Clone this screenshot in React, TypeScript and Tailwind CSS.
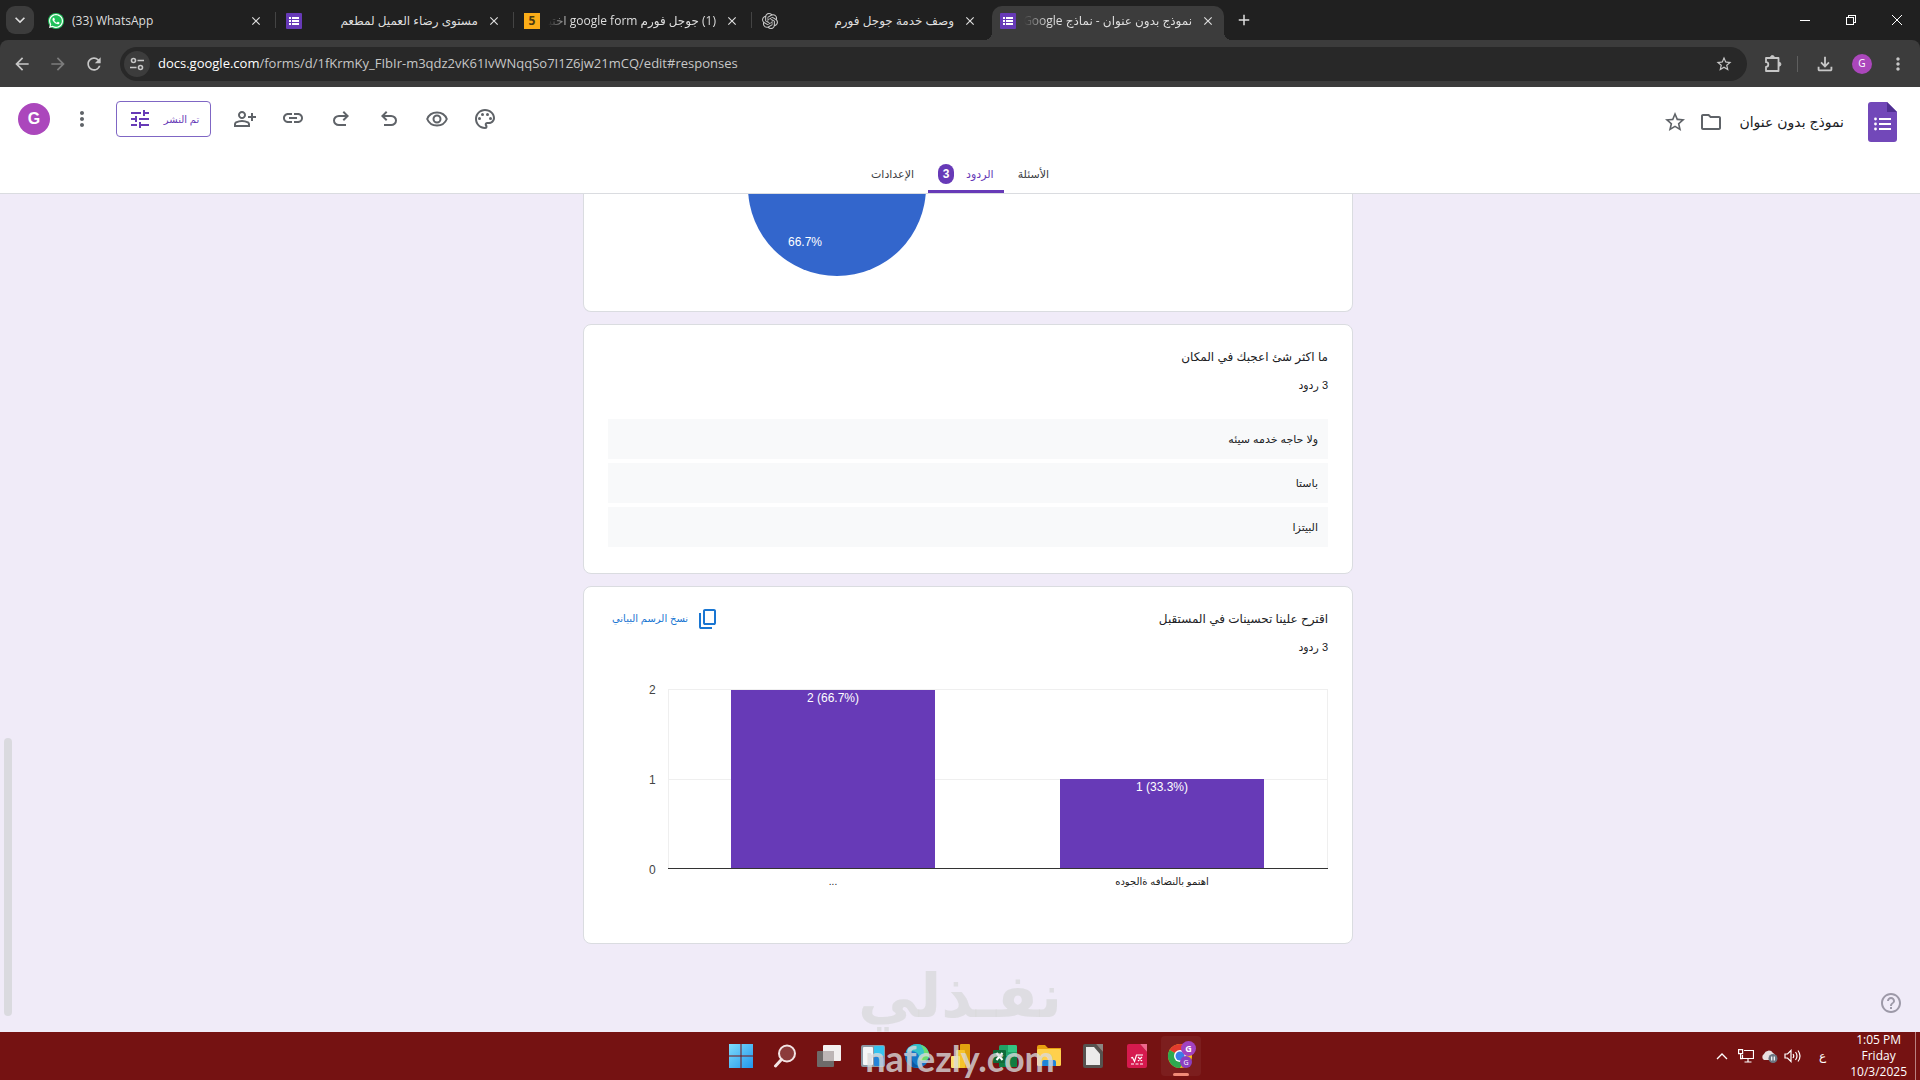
import React from 'react';
import {
  MdArrowBack,
  MdArrowForward,
  MdRefresh,
  MdStarBorder,
  MdMoreVert,
  MdTune,
  MdLink,
  MdOutlinePalette,
  MdOutlineFolder,
  MdHelpOutline,
  MdOutlineFileDownload,
  MdClose,
  MdAdd,
  MdKeyboardArrowDown,
} from 'react-icons/md';
import { FaWhatsapp } from 'react-icons/fa';
import { SiOpenai } from 'react-icons/si';

type IconProps = { className?: string };

// Material Symbols share the "0 -960 960 960" view box
const Symbol = ({ d, className }: { d: string; className?: string }) => (
  <svg viewBox="0 -960 960 960" fill="currentColor" className={className}>
    <path d={d} />
  </svg>
);

const PERSON_ADD =
  'M720-400v-120H600v-80h120v-120h80v120h120v80H800v120h-80Zm-360-80q-66 0-113-47t-47-113q0-66 47-113t113-47q66 0 113 47t47 113q0 66-47 113t-113 47ZM40-160v-112q0-34 17.500-62.500T104-378q62-31 126-46.500T360-440q66 0 130 15.500T616-378q29 15 46.500 43.500T680-272v112H40Zm80-80h480v-32q0-11-5.500-20T580-306q-54-27-109-40.500T360-360q-56 0-111 13.500T140-306q-9 5-14.500 14t-5.500 20v32Zm240-320q33 0 56.500-23.500T440-640q0-33-23.500-56.500T360-720q-33 0-56.500 23.500T280-640q0 33 23.500 56.500T360-560Z';
const REDO =
  'M396-200q-97 0-166.500-63T160-420q0-94 69.500-157T396-640h252L544-744l56-56 200 200-200 200-56-56 104-104H396q-63 0-109.500 40T240-420q0 60 46.500 100T396-280h284v80H396Z';
const UNDO =
  'M280-200v-80h284q63 0 109.500-40T720-420q0-60-46.500-100T564-560H312l104 104-56 56-200-200 200-200 56 56-104 104h252q97 0 166.500 63T800-420q0 94-69.500 157T564-200H280Z';
const COPY =
  'M360-240q-33 0-56.500-23.500T280-320v-480q0-33 23.500-56.500T360-880h360q33 0 56.500 23.500T800-800v480q0 33-23.500 56.500T720-240H360Zm0-80h360v-480H360v480ZM200-80q-33 0-56.500-23.500T120-160v-560h80v560h440v80H200Z';

const EyeIcon = ({ className }: IconProps) => (
  <svg viewBox="0 0 24 24" fill="none" stroke="currentColor" strokeWidth="2" className={className}>
    <path d="M2.200 12C3.800 8 7.600 5.500 12 5.500S20.200 8 21.800 12c-1.600 4-5.400 6.500-9.800 6.500S3.800 16 2.200 12Z" />
    <circle cx="12" cy="12" r="3.500" />
  </svg>
);

const ExtensionIcon = ({ className }: IconProps) => (
  <svg viewBox="0 0 20 20" fill="none" stroke="currentColor" strokeWidth="1.800" strokeLinejoin="round" className={className}>
    <path d="M3 4h12.500v13H3v-4.200a2.300 2.300 0 0 0 0-4.600z" />
    <path d="M7.500 3.500a1.900 1.900 0 0 1 3.800 0zM16 8.300a1.900 1.900 0 0 1 0 3.800z" fill="currentColor" strokeWidth="1" />
  </svg>
);

const FormsFavicon = () => (
  <svg viewBox="0 0 16 16" className="size-4 shrink-0">
    <rect width="16" height="16" rx="1" fill="#673ab7" />
    <path d="M3 4h2v2H3zM3 7h2v2H3zM3 10h2v2H3zM6 4h7v2H6zM6 7h7v2H6zM6 10h7v2H6z" fill="#fff" />
  </svg>
);

const WhatsAppFavicon = () => (
  <span className="flex size-4 shrink-0 items-center justify-center rounded-full bg-[#1fc15a] text-white">
    <FaWhatsapp className="size-4" />
  </span>
);

const MostaqlFavicon = () => (
  <span className="flex size-4 shrink-0 items-center justify-center bg-[#fbad18] text-xs font-bold text-[#4a3a10]">5</span>
);

const FormsLogo = () => (
  <svg viewBox="0 0 29 40" className="h-10 w-[29px]">
    <path d="M3 0h16l10 10v27a3 3 0 0 1-3 3H3a3 3 0 0 1-3-3V3a3 3 0 0 1 3-3Z" fill="#7248b9" />
    <path d="M19 0l10 10H19Z" fill="#4f2f91" />
    <g fill="#fff">
      <circle cx="7.500" cy="17" r="1.400" />
      <circle cx="7.500" cy="22" r="1.400" />
      <circle cx="7.500" cy="27" r="1.400" />
      <path d="M11 16h12v2H11zM11 21h12v2H11zM11 26h12v2H11z" />
    </g>
  </svg>
);

const tabs = [
  { title: '(33) WhatsApp', icon: <WhatsAppFavicon />, rtl: false },
  { title: 'مستوى رضاء العميل لمطعم', icon: <FormsFavicon />, rtl: true },
  { title: '(1) جوجل فورم google form اختبا', icon: <MostaqlFavicon />, rtl: true, fade: true },
  { title: 'وصف خدمة جوجل فورم', icon: <SiOpenai className="size-4 shrink-0 text-[#c8c8c8]" />, rtl: true },
  { title: 'نموذج بدون عنوان - نماذج Google', icon: <FormsFavicon />, rtl: true, fade: true, active: true },
];

const TabStrip = () => (
  <div className="flex h-10 bg-[#202020] text-[#dedede]">
    <button aria-label="Search tabs" className="mt-1.5 ml-1.5 flex size-7 shrink-0 items-center justify-center rounded-[9px] bg-[#3c3c3c]">
      <MdKeyboardArrowDown className="size-5" />
    </button>
    <div className="ml-1.5 flex min-w-0 gap-1.5">
      {tabs.map((tab, i) => (
        <div
          key={tab.title}
          className={`relative mt-1.5 flex w-[232px] min-w-0 items-center gap-2 px-2 pb-1 ${tab.active ? 'rounded-t-[10px] bg-[#3c3c3c]' : ''}`}
        >
          {tab.icon}
          <span
            dir={tab.rtl ? 'rtl' : 'ltr'}
            className={`min-w-0 flex-1 overflow-hidden text-xs leading-5 whitespace-nowrap ${
              tab.fade ? '[mask-image:linear-gradient(to_right,transparent,#000_24px)]' : ''
            }`}
          >
            {tab.title}
          </span>
          <button aria-label="Close tab" className="flex size-4 shrink-0 items-center justify-center">
            <MdClose className="size-3.5" />
          </button>
          {i < 3 && <span className="absolute top-1.5 -right-1 h-4 w-px bg-[#444]" />}
          {tab.active && (
            <>
              <span className="absolute bottom-0 -left-2 size-2 bg-[radial-gradient(circle_at_0_0,transparent_8px,#3c3c3c_8px)]" />
              <span className="absolute -right-2 bottom-0 size-2 bg-[radial-gradient(circle_at_100%_0,transparent_8px,#3c3c3c_8px)]" />
            </>
          )}
        </div>
      ))}
    </div>
    <button aria-label="New tab" className="ml-2.5 flex w-5 items-center justify-center">
      <MdAdd className="size-[18px]" />
    </button>
    <div className="ml-auto flex text-white">
      <button aria-label="Minimize" className="flex w-[46px] items-center justify-center">
        <span className="h-px w-2.5 bg-white" />
      </button>
      <button aria-label="Restore" className="flex w-[46px] items-center justify-center">
        <svg viewBox="0 0 10 10" className="size-2.5" fill="none" stroke="currentColor" shapeRendering="crispEdges">
          <path d="M.5 2.500h7v7h-7zM2.500 2.500v-2h7v7h-2" />
        </svg>
      </button>
      <button aria-label="Close" className="flex w-[46px] items-center justify-center">
        <svg viewBox="0 0 10 10" className="size-2.5" fill="none" stroke="currentColor">
          <path d="M0 0l10 10M10 0L0 10" />
        </svg>
      </button>
    </div>
  </div>
);

const AddressBar = () => (
  <div className="bg-[#202020]">
    <div className="flex h-[47px] items-center rounded-t-lg bg-[#3c3c3c] px-3 text-[#c7c7c7]">
      <div className="flex gap-4 pr-4">
        <button aria-label="Back"><MdArrowBack className="size-5" /></button>
        <button aria-label="Forward" className="text-[#7c7c7c]"><MdArrowForward className="size-5" /></button>
        <button aria-label="Reload"><MdRefresh className="size-5" /></button>
      </div>
      <div className="flex h-[34px] flex-1 items-center rounded-full bg-[#282828] pr-3.5 pl-1">
        <button aria-label="Site information" className="flex size-[26px] items-center justify-center rounded-full bg-[#3c3c3c]">
          <svg viewBox="0 0 16 16" className="size-4" fill="none" stroke="currentColor" strokeWidth="1.600">
            <circle cx="4.500" cy="4.500" r="2" />
            <path d="M8.500 4.500H15M1 11.500h6.500" />
            <circle cx="11.500" cy="11.500" r="2" />
          </svg>
        </button>
        <div className="flex-1 pl-2 text-[13px] text-[#c7c7c7]">
          <span className="text-white">docs.google.com</span>/forms/d/1fKrmKy_FIbIr-m3qdz2vK61IvWNqqSo7I1Z6jw21mCQ/edit#responses
        </div>
        <button aria-label="Bookmark"><MdStarBorder className="size-[18px]" /></button>
      </div>
      <div className="flex items-center pl-4">
        <button aria-label="Extensions"><ExtensionIcon className="size-5" /></button>
        <span className="mr-4 ml-3.5 h-4 w-px bg-[#5f5f5f]" />
        <button aria-label="Downloads"><MdOutlineFileDownload className="size-[22px]" /></button>
        <button aria-label="Profile" className="ml-4 size-5 rounded-full bg-[#ab47bc] text-[10px] text-white">G</button>
        <button aria-label="Menu" className="ml-4"><MdMoreVert className="size-5" /></button>
      </div>
    </div>
  </div>
);

const FormHeader = () => (
  <header className="flex h-[107px] flex-col border-b border-[#dadce0] bg-white font-['Liberation_Sans','DejaVu_Sans',sans-serif]">
    <div className="flex h-16 items-center pr-[23px] pl-[18px] text-[#5f6368]">
      <button aria-label="Account" className="size-8 rounded-full bg-[#ab47bc] text-base font-bold text-white">G</button>
      <button aria-label="More" className="ml-5"><MdMoreVert className="size-6" /></button>
      <button dir="rtl" className="ml-[22px] flex h-9 w-[95px] items-center justify-center gap-3 rounded border border-[#7f66c4] text-[10px] text-[#673ab7]">
        تم النشر
        <MdTune className="size-6" />
      </button>
      <div className="ml-[22px] flex gap-6">
        <button aria-label="Share"><Symbol d={PERSON_ADD} className="size-6" /></button>
        <button aria-label="Link" className="pb-0.5"><MdLink className="size-6" /></button>
        <button aria-label="Redo"><Symbol d={REDO} className="size-6" /></button>
        <button aria-label="Undo"><Symbol d={UNDO} className="size-6" /></button>
        <button aria-label="Preview"><EyeIcon className="size-6" /></button>
        <button aria-label="Theme"><MdOutlinePalette className="size-6" /></button>
      </div>
      <div className="ml-auto flex items-center pt-1.5">
        <button aria-label="Star"><MdStarBorder className="size-6" /></button>
        <button aria-label="Move" className="ml-3"><MdOutlineFolder className="size-6" /></button>
        <h1 dir="rtl" className="ml-4 text-sm text-[#202124]">نموذج بدون عنوان</h1>
        <span className="ml-6"><FormsLogo /></span>
      </div>
    </div>
    <nav dir="rtl" className="mt-1 flex flex-1 justify-center text-[11px] text-[#3c4043]">
      <a href="#questions" className="flex items-center px-3.5">الأسئلة</a>
      <a href="#responses" className="flex items-center gap-3 border-b-[3px] border-[#673ab7] px-2.5 pt-[3px] text-[#673ab7]">
        الردود
        <span className="flex h-5 w-4 items-center justify-center rounded-full bg-[#673ab7] text-xs font-bold text-white">3</span>
      </a>
      <a href="#settings" className="flex items-center px-3.5">الإعدادات</a>
    </nav>
  </header>
);

const PieCard = () => (
  <section className="h-[118px] rounded-b-lg border border-t-0 border-[#dadce0] bg-white">
    <svg viewBox="0 0 768 90" className="w-full">
      <circle cx="253" cy="-7" r="89" fill="#3366cc" />
      <text x="204" y="52" fontSize="12" fill="#fff">66.7%</text>
    </svg>
  </section>
);

const answers = ['ولا حاجه خدمه سيئه', 'باستا', 'البيتزا'];

const AnswersCard = () => (
  <section dir="rtl" className="rounded-lg border border-[#dadce0] bg-white px-6 pt-5 pb-[26px]">
    <h2 className="text-xs leading-6 text-[#202124]">ما اكثر شئ اعجبك في المكان</h2>
    <p className="mt-1.5 text-[11px] leading-5 text-[#202124]">3 ردود</p>
    <ul className="mt-6 flex flex-col gap-1">
      {answers.map((answer) => (
        <li key={answer} className="flex h-10 items-center bg-[#f8f9fa] px-2.5 text-[11px] text-[#202124]">
          {answer}
        </li>
      ))}
    </ul>
  </section>
);

const bars = [
  { x: 123, value: 2, label: '2 (66.7%)', name: '...' },
  { x: 452, value: 1, label: '1 (33.3%)', name: 'اهتمو بالنضافه ةالجوده' },
];

const ChartCard = () => (
  <section className="rounded-lg border border-[#dadce0] bg-white px-6 pt-5 pb-[42px]">
    <div className="flex items-start justify-between">
      <button dir="rtl" className="flex items-center gap-2 px-1 text-[10px] leading-6 text-[#1976d2]">
        <Symbol d={COPY} className="size-6" />
        نسخ الرسم البياني
      </button>
      <div dir="rtl" className="text-[#202124]">
        <h2 className="text-xs leading-6">اقترح علينا تحسينات في المستقبل</h2>
        <p className="mt-1.5 text-[11px] leading-5">3 ردود</p>
      </div>
    </div>
    <svg viewBox="0 0 720 220" className="mt-6 w-full" fontSize="12">
      <path d="M60 8.500H720M60 98.500H720M60.500 9V188M719.500 9V188" stroke="#efefef" fill="none" />
      {[2, 1, 0].map((n, i) => (
        <text key={n} x="41" y={13 + i * 90} fill="#444">{n}</text>
      ))}
      {bars.map((bar) => (
        <g key={bar.name} textAnchor="middle">
          <rect x={bar.x} y={187 - bar.value * 89} width="204" height={bar.value * 89} fill="#673ab7" />
          <text x={bar.x + 102} y={199 - bar.value * 89} fill="#fff">{bar.label}</text>
          <text x={bar.x + 102} y="204" fontSize="10" fill="#222" direction={bar.value === 1 ? 'rtl' : 'ltr'}>{bar.name}</text>
        </g>
      ))}
      <path d="M60 187.500H720" stroke="#333" />
    </svg>
  </section>
);

const WindowsIcon = () => (
  <svg viewBox="0 0 24 24" className="size-6">
    <defs>
      <linearGradient id="win" x1="0" y1="0" x2="1" y2="1">
        <stop offset="0" stopColor="#7fdcfb" />
        <stop offset="1" stopColor="#2196ec" />
      </linearGradient>
    </defs>
    <path d="M0 0h11.500v11.500H0zM12.500 0H24v11.500H12.500zM0 12.500h11.500V24H0zM12.500 12.500H24V24H12.500z" fill="url(#win)" />
  </svg>
);

const SearchIcon = () => (
  <svg viewBox="0 0 24 24" className="size-6" fill="none" stroke="#f3e4e4" strokeWidth="2">
    <circle cx="14" cy="9.500" r="8" fill="#8b3a3a" />
    <path d="M8.500 15.500L2.500 22" strokeWidth="3" strokeLinecap="round" />
  </svg>
);

const TaskViewIcon = () => (
  <svg viewBox="0 0 24 24" className="size-6">
    <rect x="0" y="7" width="17" height="16" rx="1" fill="#6e6a69" />
    <rect x="6" y="1" width="18" height="16" rx="1" fill="#f2f0f0" />
    <path d="M6 7h11v10H6z" fill="#bdb6b6" />
  </svg>
);

const WidgetsIcon = () => (
  <svg viewBox="0 0 24 24" className="size-6">
    <rect y="1" width="24" height="22" rx="2" fill="#8c9aa6" />
    <rect x="2" y="3" width="10" height="18" rx="1" fill="#f4f6f8" />
    <rect x="13" y="2" width="10" height="10" rx="1" fill="#35c4f0" />
    <rect x="13" y="13" width="10" height="9" rx="1" fill="#2684d9" />
  </svg>
);

const EdgeIcon = () => (
  <svg viewBox="0 0 24 24" className="size-6">
    <circle cx="12" cy="12" r="12" fill="#1577c8" />
    <path d="M1 8C3 3 7 0 12 0c7 0 12 5 12 11 0 4-3 6-6 6-3 0-5-1-4-3 1-5-6-9-13-6Z" fill="#35c1c8" />
    <path d="M15 .5c5 1.500 9 5.500 9 10.500 0 4-3 6-6 6-2 0-4-.5-4-2 7-2 6-10 1-14.500Z" fill="#6bdc6f" />
    <path d="M8 10c-3 5 0 11 8 12.500C10 25 1 22 .5 12 1 9 6 7 8 10Z" fill="#0c59a4" />
  </svg>
);

const PowerBiIcon = () => (
  <svg viewBox="0 0 24 24" className="size-6">
    <rect x="11" y="0" width="10" height="24" rx="1" fill="#e2a10f" />
    <rect x="7" y="6" width="9" height="18" rx="1" fill="#f5c42c" />
    <rect x="2" y="12" width="9" height="12" rx="1" fill="#fbe06a" />
  </svg>
);

const ExcelIcon = () => (
  <svg viewBox="0 0 24 24" className="size-6">
    <rect x="6" y="1" width="18" height="22" rx="1.500" fill="#21a366" />
    <path d="M15 1h7.500A1.500 1.500 0 0 1 24 2.500V8h-9z" fill="#33c481" />
    <path d="M6 12h18v9.500a1.500 1.500 0 0 1-1.500 1.500h-15A1.500 1.500 0 0 1 6 21.500z" fill="#107c41" />
    <rect x="0" y="6" width="13" height="13" rx="1" fill="#0f6a38" />
    <path d="M3.500 9l6 7M9.500 9l-6 7" stroke="#fff" strokeWidth="2" />
  </svg>
);

const ExplorerIcon = () => (
  <svg viewBox="0 0 24 24" className="size-6">
    <path d="M0 3a2 2 0 0 1 2-2h6l3 3h13v8H0z" fill="#e8a010" />
    <rect y="5" width="24" height="17" rx="1.500" fill="#ffd04c" />
    <path d="M5 22v-4a2 2 0 0 1 2-2h10a2 2 0 0 1 2 2v4z" fill="#1f86d8" />
  </svg>
);

const DocumentIcon = () => (
  <svg viewBox="0 0 24 24" className="size-6">
    <path d="M2 2a2 2 0 0 1 2-2h11l7 8v14a2 2 0 0 1-2 2H4a2 2 0 0 1-2-2z" fill="#565350" />
    <path d="M5 3h8l6 7v11H5z" fill="#ebebea" />
    <path d="M15 0h7v8z" fill="#8a8683" />
  </svg>
);

const MathIcon = () => (
  <svg viewBox="0 0 24 24" className="size-6">
    <path d="M2 2a2 2 0 0 1 2-2h11l7 8v14a2 2 0 0 1-2 2H4a2 2 0 0 1-2-2z" fill="#d61a4e" />
    <path d="M15 0h7v8z" fill="#f0688d" />
    <path d="M6 14l1.500-.5 2 4L11.500 11H18M13 13l4 4M17 13l-4 4M6 20h3M10.500 20h3M15 20h3" fill="none" stroke="#fff" strokeWidth="1.200" />
  </svg>
);

const ChromeIcon = () => (
  <svg viewBox="0 0 30 30" className="size-[30px]">
    <circle cx="14" cy="15" r="12" fill="#fbc116" />
    <path d="M14 15L3.600 9A12 12 0 0 1 24.400 9Z" fill="#e33b2e" />
    <path d="M14 15L3.600 9A12 12 0 0 0 14 27l5-9Z" fill="#2da94f" />
    <circle cx="14" cy="15" r="6" fill="#fff" />
    <circle cx="14" cy="15" r="4.500" fill="#3c7ce8" />
    <circle cx="22.500" cy="7.500" r="7.500" fill="#a142c0" />
    <circle cx="20" cy="21" r="6" fill="#8b3fc0" />
    <text x="22.500" y="11" fontSize="9" fontWeight="bold" fill="#fff" textAnchor="middle">G</text>
    <text x="20" y="23.500" fontSize="7" fill="#fff" textAnchor="middle">G</text>
  </svg>
);

const apps = [
  { name: 'Start', icon: <WindowsIcon /> },
  { name: 'Search', icon: <SearchIcon /> },
  { name: 'Task view', icon: <TaskViewIcon /> },
  { name: 'Widgets', icon: <WidgetsIcon /> },
  { name: 'Edge', icon: <EdgeIcon /> },
  { name: 'Power BI', icon: <PowerBiIcon /> },
  { name: 'Excel', icon: <ExcelIcon /> },
  { name: 'File Explorer', icon: <ExplorerIcon /> },
  { name: 'LibreOffice', icon: <DocumentIcon /> },
  { name: 'Math', icon: <MathIcon /> },
];

const Taskbar = () => (
  <footer className="grid h-12 grid-cols-[1fr_auto_1fr] items-center bg-[#751212] text-white">
    <div />
    <div className="flex items-center gap-1 pl-0.5">
      {apps.map((app) => (
        <button key={app.name} aria-label={app.name} className="flex size-10 items-center justify-center">
          {app.icon}
        </button>
      ))}
      <button aria-label="Chrome" className="relative flex size-10 items-center justify-center rounded bg-white/5">
        <ChromeIcon />
        <span className="absolute bottom-0 h-[3px] w-4 rounded-full bg-[#f08a78]" />
      </button>
    </div>
    <div className="flex h-full items-center justify-end">
      <svg viewBox="0 0 12 8" className="w-3" fill="none" stroke="currentColor" strokeWidth="1.300">
        <path d="M1 7l5-5 5 5" />
      </svg>
      <svg viewBox="0 0 16 14" className="ml-2.5 w-4" fill="none" stroke="currentColor" strokeWidth="1.200">
        <path d="M6 1.500h9.500v8H4.500V6M10 9.500V13M6.500 13h7M.6.600h4v4h-4zM2.600 4.600v5h2" />
      </svg>
      <svg viewBox="0 0 18 14" className="ml-1.5 w-[18px]">
        <path d="M4 11a3.500 3.500 0 0 1 0-6 5 5 0 0 1 9-1 4 4 0 0 1 1 7z" fill="#eadfdf" />
        <circle cx="13" cy="9.500" r="4.500" fill="#6c7480" />
        <path d="M11.700 7.500v4M14.300 7.500v4" stroke="#fff" strokeWidth="1.200" />
      </svg>
      <svg viewBox="0 0 17 14" className="ml-1.5 w-[17px]" fill="none" stroke="currentColor" strokeWidth="1.200">
        <path d="M1 5h2.500L7 1.500v11L3.500 9H1zM9 5q1.500 2 0 4M11.500 3q3 4 0 8M14 1.500q4 5.500 0 11" />
      </svg>
      <span className="ml-[18px] text-xs">ع</span>
      <div className="ml-6 text-center text-xs leading-4">
        <div>1:05 PM</div>
        <div>Friday</div>
        <div>10/3/2025</div>
      </div>
      <span className="mr-1 ml-2 h-full w-px bg-[#b98080]" />
    </div>
  </footer>
);

const App: React.FC = () => {
  return (
    <div className="relative flex h-screen flex-col overflow-hidden bg-[#f0ebf8] font-['Open_Sans','DejaVu_Sans',sans-serif]">
      <TabStrip />
      <AddressBar />
      <FormHeader />
      <main className="relative flex-1 overflow-hidden pl-4 font-['Liberation_Sans','DejaVu_Sans',sans-serif]">
        <div className="mx-auto flex max-w-[770px] flex-col gap-3">
          <PieCard />
          <AnswersCard />
          <ChartCard />
        </div>
        <div className="absolute bottom-4 left-1 h-[278px] w-2 rounded-full bg-[#dadadf]" />
        <button aria-label="Help" className="absolute right-[17px] bottom-[17px] text-[#9d99a8]">
          <MdHelpOutline className="size-6" />
        </button>
      </main>
      <Taskbar />

      {/* Site watermark over the bottom of the screen */}
      <div className="pointer-events-none absolute inset-x-0 bottom-0 flex flex-col items-center text-[#dadadc]/80">
        <span dir="rtl" className="mb-2 font-['DejaVu_Sans',sans-serif] text-6xl leading-[64px] font-bold">نفـذلي</span>
        <span className="font-['Lato',sans-serif] text-4xl leading-[44px] font-bold">nafezly.com</span>
      </div>
    </div>
  );
};

export default App;
